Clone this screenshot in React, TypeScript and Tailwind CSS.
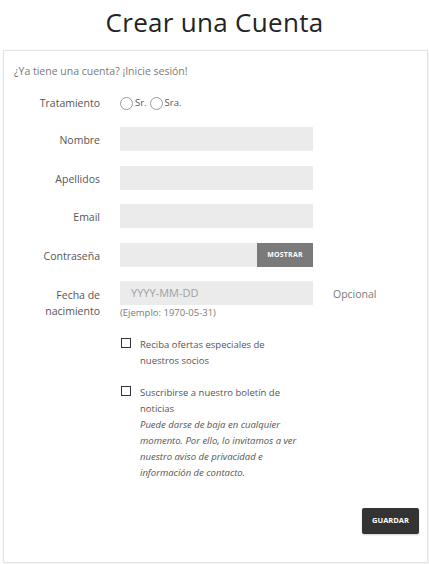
export default function App() {
  const font = { fontFamily: '"Open Sans", "Noto Sans", sans-serif' };
  return (
    <div className="w-[429px] h-[564px] bg-white overflow-hidden" style={font}>
      <h1 className="text-center text-[26px] leading-[34px] pt-[5px] text-[#232323] tracking-[0.3px]">
        Crear una Cuenta
      </h1>
      <div className="ml-[3px] mt-[11px] w-[425px] h-[513px] border border-[#e3e3e3] shadow-[1px_1px_3px_rgba(0,0,0,0.08)] pl-[10px] pr-[8px] pt-[12px]">
        <p className="text-[10.5px] text-[#7a7a7a] leading-[16px]">
          ¿Ya tiene una cuenta? ¡Inicie sesión!
        </p>

        <div className="grid grid-cols-[86px_193px_auto] gap-x-[20px] mt-[16px] text-[10.5px] text-[#555]">
          {/* Tratamiento */}
          <div className="text-right leading-[16px] self-center">Tratamiento</div>
          <div className="flex items-center h-[16px] gap-[2px] text-[9.5px]">
            <span className="w-[13px] h-[13px] rounded-full border border-[#9a9a9a]" />
            <span>Sr.</span>
            <span className="ml-[1px] w-[13px] h-[13px] rounded-full border border-[#9a9a9a]" />
            <span>Sra.</span>
          </div>
          <div />

          {[
            ["Nombre", "mt-[16px]"],
            ["Apellidos", "mt-[15px]"],
            ["Email", "mt-[14px]"],
          ].map(([label, mt]) => (
            <div key={label} className="contents">
              <div className={`${mt} text-right self-center pt-[3px]`}>{label}</div>
              <div className={`${mt} h-[24px] bg-[#ebebeb]`} />
              <div />
            </div>
          ))}

          <div className="mt-[15px] text-right self-center pt-[3px]">Contraseña</div>
          <div className="mt-[15px] h-[24px] bg-[#ebebeb] flex justify-end">
            <span className="w-[56px] h-[24px] bg-[#7a7a7a] text-white text-[7px] font-bold flex items-center justify-center tracking-[0.2px]">
              MOSTRAR
            </span>
          </div>
          <div />

          <div className="mt-[14px] text-right leading-[16px] pt-[6px]">
            Fecha de
            <br />
            nacimiento
          </div>
          <div className="mt-[14px]">
            <div className="h-[24px] bg-[#ebebeb] flex items-center pl-[11px] text-[11px] text-[#a0a0a0]">
              YYYY-MM-DD
            </div>
            <div className="text-[9.5px] text-[#7a7a7a] leading-[14px] mt-[1px]">
              (Ejemplo: 1970-05-31)
            </div>
          </div>
          <div className="mt-[14px] h-[24px] flex items-center pt-[3px] text-[10.5px] text-[#7a7a7a]">
            Opcional
          </div>
        </div>

        <div className="ml-[107px] mt-[17px] w-[180px] text-[9.5px] text-[#555] leading-[16px]">
          <div className="flex gap-[9px]">
            <span className="mt-[1px] shrink-0 w-[10px] h-[10px] border border-[#333]" />
            <span>Reciba ofertas especiales de nuestros socios</span>
          </div>
          <div className="flex gap-[9px] mt-[16px]">
            <span className="mt-[1px] shrink-0 w-[10px] h-[10px] border border-[#333]" />
            <span>
              Suscribirse a nuestro boletín de noticias
              <br />
              <em>
                Puede darse de baja en cualquier momento. Por ello, lo invitamos a ver nuestro aviso de
                privacidad e información de contacto.
              </em>
            </span>
          </div>
        </div>

        <div className="flex justify-end mt-[27px]">
          <button className="w-[57px] h-[26px] bg-[#333] rounded-[2px] text-white text-[7.5px] font-bold shadow-[0_1px_2px_rgba(0,0,0,0.2)]">
            GUARDAR
          </button>
        </div>
      </div>
    </div>
  );
}
